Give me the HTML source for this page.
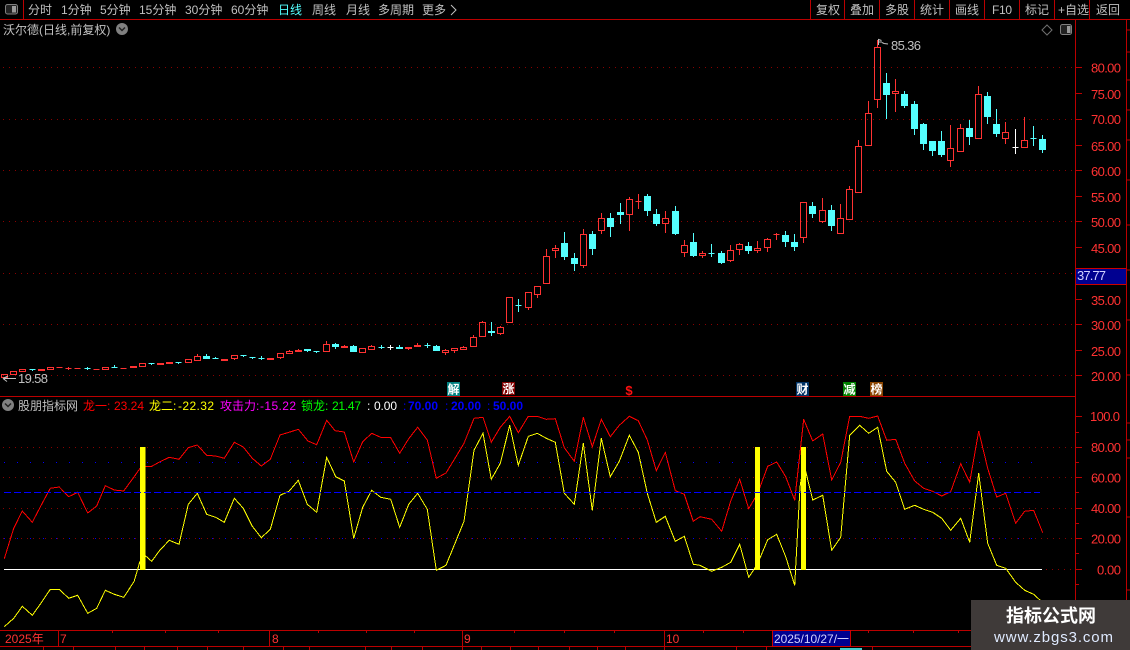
<!DOCTYPE html>
<html lang="zh">
<head>
<meta charset="utf-8">
<title>沃尔德</title>
<style>
html,body{margin:0;padding:0;background:#000;width:1130px;height:650px;overflow:hidden}
svg{display:block;position:absolute;left:0;top:0}
text{font-family:"Liberation Sans","Noto Sans CJK SC",sans-serif;font-size:12px;fill:#c0c0c0}
.a{fill:#ff3232;font-size:13px}
.w{fill:#fff;font-weight:bold;text-anchor:middle}
</style>
</head>
<body>
<svg width="1130" height="650" viewBox="0 0 1130 650" xmlns="http://www.w3.org/2000/svg">
<rect width="1130" height="650" fill="#000"/>

<!-- grid main -->
<g shape-rendering="crispEdges" fill="none">
<path d="M3 67.5H1075M3 119.5H1075M3 170.5H1075M3 221.5H1075M3 273.5H1075M3 324.5H1075M3 375.5H1075" stroke="#8a0000" stroke-dasharray="1 5"/>
<path d="M3 447.5H1075M3 477.5H1075M3 508.5H1075M3 538.5H1075M1040 569.5H1075" stroke="#8a0000" stroke-dasharray="1 5"/>
<path d="M4 462.5H1040M4 538.5H1040" stroke="#0000ff" stroke-dasharray="1 12"/>
</g>

<!-- candles -->
<g shape-rendering="crispEdges">
<path fill="none" stroke="#ff3232" d="M1.5 374.5h6v3h-6zM4.5 378v2M10.5 371.5h6v3h-6zM19.5 369.5h6v2h-6zM47.5 367.5h6v2h-6zM102.5 367.5h6v2h-6zM139.5 363.5h6v3h-6zM185.5 359.5h6v3h-6zM194.5 356.5h6v4h-6zM197.5 354v2.5M231.5 355.5h6v3h-6zM234.5 358.5v1.5M277.5 353.5h6v4h-6zM280.5 357.5v1.5M286.5 351.5h6v2h-6zM289.5 350v1.5M323.5 344.5h6v7h-6zM326.5 341v3.5M359.5 348.5h6v4h-6zM368.5 346.5h6v3h-6zM371.5 345v1.5M442.5 350.5h6v2h-6zM445.5 349v1.5M445.5 352.5v2.5M451.5 348.5h6v2h-6zM454.5 350.5v2.5M460.5 347.5h6v2h-6zM463.5 346v1.5M470.5 337.5h6v9h-6zM473.5 335v2.5M479.5 322.5h6v14h-6zM482.5 321v1.5M497.5 327.5h6v6h-6zM500.5 326v1.5M500.5 333.5v1.5M506.5 297.5h6v25h-6zM525.5 292.5h6v15h-6zM528.5 307.5v2.5M534.5 286.5h6v8h-6zM537.5 294.5v3.5M543.5 256.5h6v27h-6zM546.5 249v7.5M552.5 248.5h6v2h-6zM555.5 245v3.5M555.5 250.5V258M580.5 234.5h6v31h-6zM583.5 229v5.5M583.5 265.5V268M598.5 218.5h6v12h-6zM601.5 213v5.5M601.5 230.5V234M626.5 199.5h6v15h-6zM629.5 197v2.5M629.5 214.5V231M662.5 218.5h6v5h-6zM665.5 211v7.5M665.5 223.5V233M681.5 245.5h6v7h-6zM684.5 240v5.5M684.5 252.5V257M699.5 253.5h6v2h-6zM702.5 251v2.5M702.5 255.5V258M727.5 250.5h6v10h-6zM730.5 245v5.5M730.5 260.5V262M736.5 244.5h6v5h-6zM739.5 243v1.5M739.5 249.5V255M754.5 248.5h6v2h-6zM757.5 241v7.5M757.5 250.5V253M764.5 239.5h6v8h-6zM767.5 238v1.5M767.5 247.5V252M800.5 202.5h6v35h-6zM803.5 237.5V243M819.5 210.5h6v11h-6zM822.5 198v12.5M822.5 221.5V223M837.5 218.5h6v15h-6zM840.5 204v14.5M846.5 189.5h6v30h-6zM849.5 186v3.5M855.5 146.5h6v46h-6zM858.5 140v6.5M865.5 113.5h6v32h-6zM868.5 101v12.5M874.5 47.5h6v52h-6zM877.5 40v7.5M877.5 99.5V108M892.5 91.5h6v2h-6zM895.5 79v12.5M895.5 93.5V112M947.5 148.5h6v12h-6zM950.5 125v23.5M950.5 160.5V167M957.5 128.5h6v23h-6zM960.5 124v4.5M975.5 94.5h6v44h-6zM978.5 86v8.5M1002.5 132.5h6v6h-6zM1005.5 122v10.5M1005.5 138.5V144M1021.5 140.5h6v7h-6zM1024.5 117v23.5"/>
<path fill="#ff3232" stroke="#ff3232" d="M38.5 369.5h6v1h-6zM56.5 367.5h6M65.5 368.5h6M68.5 367v3M74.5 368.5h6M93.5 369.5h6M120.5 368.5h6M130.5 366.5h6v1h-6zM157.5 363.5h6v1h-6zM166.5 362.5h6v1h-6zM221.5 359.5h6v1h-6zM267.5 358.5h6v1h-6zM295.5 350.5h6v1h-6zM298.5 349v1.5M341.5 346.5h6v1h-6zM344.5 345v1.5M405.5 347.5h6v1h-6zM408.5 348.5v1.5M414.5 345.5h6v1h-6zM417.5 343v2.5M635.5 201.5h6M638.5 194v15M773.5 234.5h6M776.5 233v7"/>
<path fill="#54ffff" stroke="#54ffff" d="M203.5 356.5h6v2h-6zM206.5 354v2.5M304.5 349.5h6v1h-6zM307.5 350.5v1.5M332.5 344.5h6v2h-6zM335.5 343v1.5M335.5 346.5v2.5M350.5 346.5h6v5h-6zM353.5 345v1.5M396.5 347.5h6v1h-6zM399.5 345v2.5M433.5 346.5h6v4h-6zM436.5 345v1.5M561.5 243.5h6v13h-6zM564.5 232v11.5M564.5 256.5V260M571.5 258.5h6v5h-6zM574.5 253v5.5M574.5 263.5V271M589.5 234.5h6v14h-6zM592.5 231v3.5M592.5 248.5V255M607.5 218.5h6v8h-6zM610.5 213v5.5M610.5 226.5V237M617.5 212.5h6v2h-6zM620.5 203v9.5M620.5 214.5V224M644.5 196.5h6v14h-6zM647.5 194v2.5M647.5 210.5V216M653.5 214.5h6v9h-6zM656.5 209v5.5M656.5 223.5V226M672.5 211.5h6v22h-6zM675.5 206v5.5M675.5 233.5V235M690.5 242.5h6v13h-6zM693.5 233v9.5M693.5 255.5V257M718.5 253.5h6v9h-6zM721.5 251v2.5M721.5 262.5V264M745.5 246.5h6v4h-6zM748.5 242v4.5M748.5 250.5V254M782.5 235.5h6v6h-6zM785.5 231v4.5M785.5 241.5V247M791.5 242.5h6v4h-6zM794.5 234v8.5M794.5 246.5V251M809.5 206.5h6v7h-6zM812.5 202v4.5M812.5 213.5V218M828.5 210.5h6v15h-6zM831.5 205v5.5M831.5 225.5V231M883.5 83.5h6v11h-6zM886.5 73v10.5M886.5 94.5V119M901.5 94.5h6v11h-6zM904.5 91v3.5M904.5 105.5V108M911.5 104.5h6v24h-6zM914.5 101v3.5M914.5 128.5V135M920.5 124.5h6v19h-6zM923.5 123v1.5M923.5 143.5V150M929.5 141.5h6v9h-6zM932.5 150.5V156M938.5 141.5h6v13h-6zM941.5 131v10.5M941.5 154.5V157M966.5 128.5h6v8h-6zM969.5 120v8.5M969.5 136.5V145M984.5 96.5h6v20h-6zM987.5 92v4.5M987.5 116.5V124M993.5 124.5h6v9h-6zM996.5 109v15.5M996.5 133.5V137M1039.5 139.5h6v10h-6zM1042.5 135v4.5M1042.5 149.5V153M29.5 369.5h6M32.5 369.5V371M84.5 368.5h6M87.5 367v3M111.5 367.5h6M114.5 365v3M148.5 363.5h6M151.5 363.5V365M175.5 362.5h6M178.5 362.5V364M212.5 358.5h6M215.5 357v2M240.5 355.5h6M243.5 355.5V357M249.5 357.5h6M252.5 357.5V359M258.5 358.5h6M261.5 356v4M313.5 351.5h6M316.5 351.5V353M378.5 347.5h6M381.5 345v4M424.5 345.5h6M427.5 343v5M488.5 331.5h6v1h-6zM491.5 322v14M515.5 305.5h6M518.5 299v13M708.5 253.5h6M711.5 244v13M1030.5 138.5h6M1033.5 126v20"/>
<path fill="none" stroke="#fff" d="M387.5 347.5h6M390.5 345v5M1012.5 147.5h6M1015.5 129v25"/>
</g>

<!-- indicator lines -->
<path d="M4 569.5H1042" stroke="#fff" fill="none" shape-rendering="crispEdges"/>
<g fill="none" shape-rendering="crispEdges">
<polyline stroke="#ff0000" points="4.3,558.7 13.7,528.3 22.3,511 32.3,522.3 41.3,505 50.3,488.3 59.3,487 68.7,496.7 77.7,492.3 87.7,513 96.7,506 105.3,485.7 114.3,490 123.7,491 132.7,478.7 141.7,466 151,466.7 160,461.7 169.3,457.3 179,459.3 188.3,447.7 197.3,445 206.7,455.3 215.7,456 224.3,458.3 234.3,442.3 243.3,447 252.3,458.3 261.3,466 270.3,459.3 280,435 289,432.3 298.3,429.3 308,441 316.7,444.7 326.7,420.3 335,430.7 344.3,432 353.7,462 362.7,441.7 371.7,433.3 380.7,437.3 390.7,437.7 399.7,453.3 408.7,438.7 417.7,427.3 427.3,440 436.3,478.3 446,473 455,458.3 464,443.3 474,418.3 483,417.3 491.3,442.3 500.3,427.3 509.7,416.3 518.3,432.7 528.3,416.3 537.3,416.3 546.3,419.3 555.3,418.7 564.3,447.7 574.3,461.3 583.3,417.3 592.3,446.7 601.3,419.3 610.3,436.7 619.3,425.3 629.3,416.3 638.3,420.7 647.3,440 656.3,470.7 665.3,452.3 675.3,490.7 684.3,494.3 693.3,521.3 700,516.7 711.7,519.3 721.7,531.3 730.7,501 739.7,479.3 748.7,508.7 757.7,493.3 767.7,466.3 776.7,462 785.7,476.7 794.7,500.3 803.7,419.3 812.7,441 822.7,434 831.7,480 840.7,462.3 849.7,416.3 859.7,416.3 868.7,418.3 877.7,416 886.7,440.3 895.7,439.3 904.7,463.3 914.7,481 923.7,488.3 932.7,491.3 941.7,496 950.7,491.7 960.7,463.7 969.7,482.3 978.7,431 987.7,468.3 996.7,497 1005.7,493.3 1015.7,523.3 1024.7,511.3 1033.7,510.3 1042.7,532.7"/>
<polyline stroke="#ffff00" points="4.3,626.7 13.7,618.3 22.3,606.3 32.3,615.3 41.3,602.7 50.3,589.3 59.3,589.3 68.7,598.3 77.7,595.3 87.7,613.3 96.7,608.3 105.3,590.3 114.3,594.3 123.7,597.3 134,581.7 140,561.3 145.3,555.7 151.7,561.3 160,550 169.3,540.3 179,544.3 188.3,504.3 197.3,493.3 206.7,514.3 215.7,517.3 224.3,522.3 234.3,498.3 243.3,508.3 252.3,526.3 261.3,537.7 270.3,529.3 280,495.3 289,491.3 298.3,480.3 307.3,504.3 316.7,512.3 326.7,457.3 335.7,476.7 344.3,481 353.7,538.3 362.7,507.3 371.7,490.3 380.7,497.3 390.7,499.3 399.7,527.3 408.7,504.3 417.7,493.3 427.3,509.3 436.3,570.3 446,565.3 455,543.3 464,521.3 474,450.3 483,433.3 491.3,479.3 500.3,463.3 509.7,425.3 518.3,465.3 528.3,436.3 537.3,433.3 546.3,438.3 555.3,442.3 564.3,493.3 574.3,504.3 583.3,443.3 592.3,510.3 601.3,438.3 610.3,476.7 619.3,461.3 629.3,435.3 638.3,452.3 647.3,493.3 656.3,522.3 665.3,516.3 675.3,541.3 684.3,536.3 693.3,564.3 700,565.3 711.7,571.3 721.7,567.3 730.7,562.3 739.7,544.3 748.7,577.3 754.7,568.3 760,558 767.7,539.7 776.7,534.3 785.7,556.7 794.7,585.3 800,487 803.7,463.3 812.7,500 822.7,495.3 831.7,550.3 840.7,537.3 849.7,435.3 859.7,425.3 868.7,433.3 877.7,427.3 886.7,471.3 895.7,482.3 904.7,509.3 914.7,505.3 923.7,509.3 932.7,512.3 941.7,518.3 950.7,530.3 960.7,518.3 969.7,542.3 978.7,473.3 987.7,543.3 996.7,565.3 1005.7,568.3 1015.7,582.3 1024.7,590.3 1033.7,594.3 1042,602"/>
</g>
<rect x="140" y="447" width="5.5" height="123" fill="#ffff00"/>
<rect x="755" y="447" width="5" height="123" fill="#ffff00"/>
<rect x="801" y="447" width="5" height="123" fill="#ffff00"/>
<path d="M4 492.5H1040" stroke="#0000ff" stroke-dasharray="7 3" fill="none" shape-rendering="crispEdges"/>

<!-- frame lines -->
<g fill="none" stroke="#bb0000" shape-rendering="crispEdges">
<path d="M0 19.5H1130M23.5 0V19M810.5 0V19M844.5 0V19M879.5 0V19M914.5 0V19M949.5 0V19M984.5 0V19M1019.5 0V19M1054.5 0V19M1089.5 0V19"/>
<path d="M0 396.5H1075M1075.5 19V630M0 630.5H1130M0 646.5H1130"/>
<path d="M58.5 630V646M269.5 630V646M462.5 630V646M664.5 630V646"/>
<path d="M112.5 631v2M165.5 631v2M218.5 631v2M318.5 631v2M366.5 631v2M414.5 631v2M514.5 631v2M564.5 631v2M614.5 631v2M703.5 631v2M743.5 631v2M868.5 631v2M913.5 631v2M958.5 631v2"/>
<path d="M43.5 647v3M73.5 647v3M115.5 647v3M144.5 647v3M177.5 647v3M207.5 647v3M243.5 647v3M283.5 647v3M309.5 647v3M365.5 647v3M391.5 647v3M422.5 647v3M462.5 647v3M481.5 647v3M510.5 647v3M538.5 647v3M569.5 647v3M597.5 647v3M625.5 647v3M664.5 647v3M736.5 647v3M766.5 647v3M872.5 647v3"/>
<path d="M1076 67.5h6M1076 93.5h6M1076 119.5h6M1076 145.5h6M1076 170.5h6M1076 196.5h6M1076 221.5h6M1076 247.5h6M1076 299.5h6M1076 324.5h6M1076 350.5h6M1076 375.5h6"/>
<path d="M1076 416.5h6M1076 447.5h6M1076 477.5h6M1076 508.5h6M1076 538.5h6M1076 569.5h6M1076 432.5h3M1076 462.5h3M1076 492.5h3M1076 523.5h3M1076 553.5h3M1076 584.5h3M1076 600.5h3M1076 615.5h3"/>
<path d="M1126.5 19V600M1127 30h3M1127 52h3M1127 80h3M1127 110h3M1127 140h3M1127 180h3M1127 225h3M1127 270h3M1127 320h3M1127 375h3M1127 423h3M1127 440h3M1127 458h3M1127 517h3M1127 590h3"/>
</g>

<!-- price tag -->
<rect x="1076" y="268" width="50" height="16" fill="#000090"/>
<path d="M1076 268.5h50M1076 284.5h50" stroke="#cc0000" shape-rendering="crispEdges"/>
<text x="1077" y="280" font-size="13" style="font-size:13px;fill:#d0d0ff" textLength="29">37.77</text>

<!-- toolbar left -->
<rect x="5.5" y="4.5" width="12" height="9.5" rx="2" fill="#222" stroke="#808080"/>
<rect x="12" y="6" width="4" height="6.5" fill="#9a9a9a"/>
<text x="28" y="14">分时</text>
<text x="61" y="14">1分钟</text>
<text x="100" y="14">5分钟</text>
<text x="139" y="14">15分钟</text>
<text x="185" y="14">30分钟</text>
<text x="231" y="14">60分钟</text>
<text x="278" y="14" style="fill:#54ffff">日线</text>
<text x="312" y="14">周线</text>
<text x="346" y="14">月线</text>
<text x="378" y="14">多周期</text>
<text x="422" y="14">更多</text>
<path d="M451 5l5 5-5 5" fill="none" stroke="#c0c0c0"/>

<!-- toolbar right -->
<text x="816" y="14">复权</text>
<text x="850" y="14">叠加</text>
<text x="885" y="14">多股</text>
<text x="920" y="14">统计</text>
<text x="955" y="14">画线</text>
<text x="992" y="14" textLength="20">F10</text>
<text x="1025" y="14">标记</text>
<text x="1058" y="14">+自选</text>
<text x="1096" y="14">返回</text>

<!-- title -->
<text x="3" y="34">沃尔德(日线,前复权)</text>
<circle cx="122" cy="29" r="6" fill="#808080"/>
<path d="M119 27.5l3 3 3-3" fill="none" stroke="#222" stroke-width="1.5"/>
<path d="M1047 25l5 5-5 5-5-5z" fill="none" stroke="#707070"/>
<rect x="1060.5" y="24.5" width="11" height="10" rx="2" fill="#222" stroke="#808080"/>
<rect x="1067" y="26" width="3.5" height="7" fill="#9a9a9a"/>

<!-- price notes -->
<path d="M878.5 45V39.5l3 1M879 42h3M882 42.500l2 1 4 .5" fill="none" stroke="#c0c0c0"/>
<text x="891" y="50" style="font-size:13px" textLength="30">85.36</text>
<path d="M3 378.500l5-2.500M3 378.500l4 3M4 378.500H16" fill="none" stroke="#c0c0c0"/>
<text x="18" y="383" style="font-size:13px" textLength="30">19.58</text>

<!-- axis labels -->
<g>
<text class="a" x="1091" y="72.500" textLength="30">80.00</text>
<text class="a" x="1091" y="99" textLength="30">75.00</text>
<text class="a" x="1091" y="124" textLength="30">70.00</text>
<text class="a" x="1091" y="151" textLength="30">65.00</text>
<text class="a" x="1091" y="176" textLength="30">60.00</text>
<text class="a" x="1091" y="202" textLength="30">55.00</text>
<text class="a" x="1091" y="227" textLength="30">50.00</text>
<text class="a" x="1091" y="253" textLength="30">45.00</text>
<text class="a" x="1091" y="305" textLength="30">35.00</text>
<text class="a" x="1091" y="330" textLength="30">30.00</text>
<text class="a" x="1091" y="356" textLength="30">25.00</text>
<text class="a" x="1091" y="381" textLength="30">20.00</text>
<text class="a" x="1090" y="421" textLength="30">100.0</text>
<text class="a" x="1091" y="452" textLength="30">80.00</text>
<text class="a" x="1091" y="482.500" textLength="30">60.00</text>
<text class="a" x="1091" y="513" textLength="30">40.00</text>
<text class="a" x="1091" y="543.500" textLength="30">20.00</text>
<text class="a" x="1097" y="574.500" textLength="24">0.00</text>
</g>

<!-- signals -->
<rect x="447" y="382" width="13" height="14" fill="#008080"/>
<text class="w" x="453.500" y="393.500">解</text>
<rect x="502" y="382" width="13" height="13" fill="#800000"/>
<text class="w" x="508.500" y="393">涨</text>
<text x="629" y="395" style="fill:#ff1010;font-weight:bold;font-size:13px;text-anchor:middle">$</text>
<rect x="796" y="382" width="13" height="14" fill="#003366"/>
<text class="w" x="802.500" y="393.500">财</text>
<rect x="843" y="382" width="13" height="14" fill="#008000"/>
<text class="w" x="849.500" y="393.500">减</text>
<rect x="870" y="382" width="13" height="14" fill="#8b4500"/>
<text class="w" x="876.500" y="393.500">榜</text>

<!-- indicator header -->
<circle cx="8" cy="405" r="6" fill="#808080"/>
<path d="M5 403.500l3 3 3-3" fill="none" stroke="#222" stroke-width="1.500"/>
<text x="18" y="410">股朋指标网</text>
<text x="83" y="410" style="fill:#ff0000">龙一:</text>
<text x="114" y="410" style="fill:#ff0000" textLength="30">23.24</text>
<text x="149" y="410" style="fill:#ffff00">龙二:</text>
<text x="178" y="410" style="fill:#ffff00" textLength="36">-22.32</text>
<text x="220" y="410" style="fill:#ff00ff">攻击力:</text>
<text x="260" y="410" style="fill:#ff00ff" textLength="36">-15.22</text>
<text x="301" y="410" style="fill:#00ff00">锁龙:</text>
<text x="332" y="410" style="fill:#00ff00" textLength="29">21.47</text>
<text x="367" y="410" style="fill:#fff">:</text>
<text x="374" y="410" style="fill:#fff" textLength="23">0.00</text>
<text x="403" y="410" style="fill:#0000ff">:</text>
<text x="408" y="410" style="fill:#0000ff;font-weight:bold" textLength="30">70.00</text>
<text x="445" y="410" style="fill:#0000ff">:</text>
<text x="451" y="410" style="fill:#0000ff;font-weight:bold" textLength="30">20.00</text>
<text x="487" y="410" style="fill:#0000ff">:</text>
<text x="493" y="410" style="fill:#0000ff;font-weight:bold" textLength="30">50.00</text>

<!-- time axis -->
<text x="5" y="643" style="fill:#ff3232">2025年</text>
<text x="60" y="643" style="fill:#ff3232">7</text>
<text x="272" y="643" style="fill:#ff3232">8</text>
<text x="464" y="643" style="fill:#ff3232">9</text>
<text x="666" y="643" style="fill:#ff3232">10</text>
<rect x="772.500" y="630.500" width="78" height="16" fill="#000090" stroke="#cc0000"/>
<text x="774" y="643" style="fill:#d0d0ff" textLength="75">2025/10/27/一</text>
<rect x="840" y="648" width="22" height="2" fill="#54ffff" opacity=".8"/>

<!-- watermark -->
<rect x="971" y="600" width="159" height="50" fill="#3f3a39"/>
<text x="1051" y="622" style="fill:#fff;font-weight:bold;font-size:18px;text-anchor:middle">指标公式网</text>
<text x="994" y="642" style="fill:#dfeaff;font-size:15px" textLength="119">www.zbgs3.com</text>
</svg>
</body>
</html>
